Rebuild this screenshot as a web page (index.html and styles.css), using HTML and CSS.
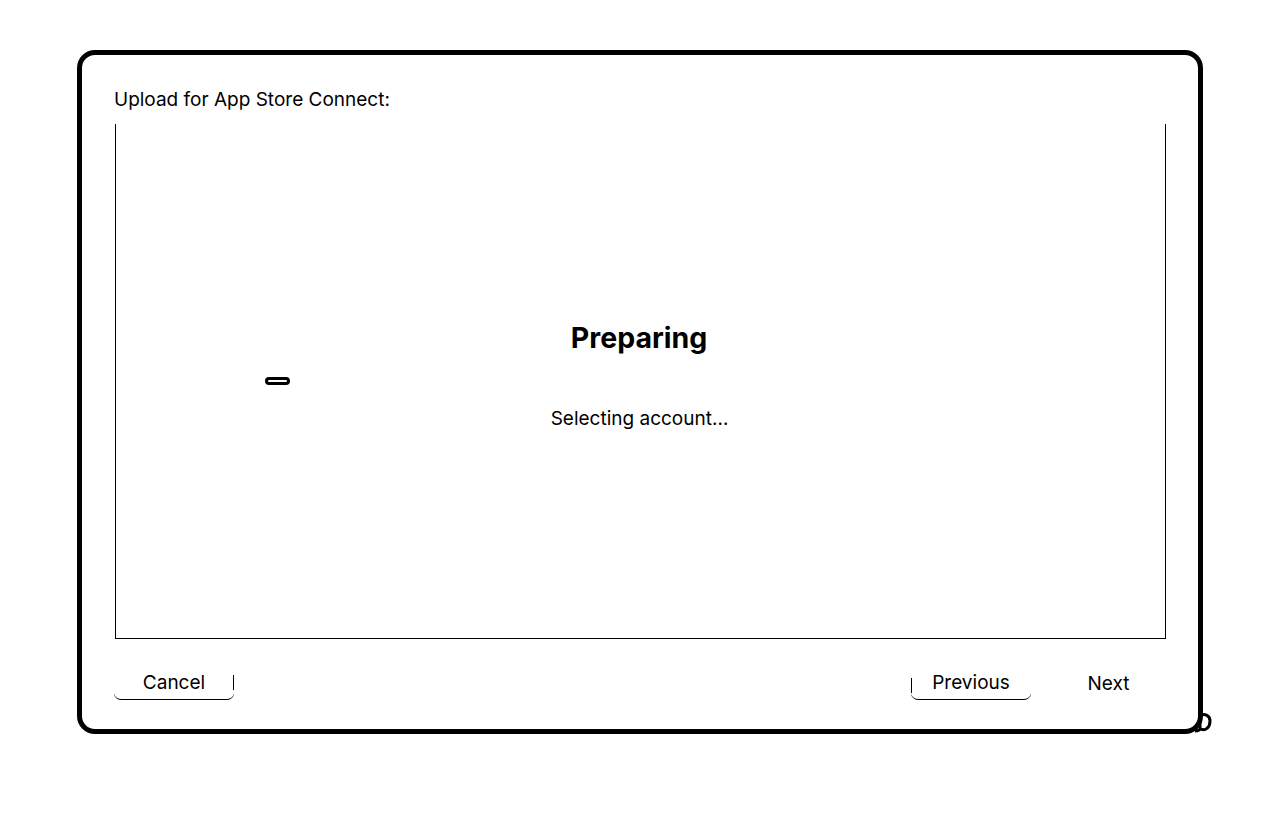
FILE: index.html
```html
<!DOCTYPE html>
<html lang="en">
<head>
<meta charset="utf-8">
<title>Upload for App Store Connect</title>
<link rel="stylesheet" href="styles.css">
</head>
<body>
<div class="page">
  <div class="window">
    <div class="title">Upload for App Store Connect:</div>
    <div class="panel">
      <div class="spinner"></div>
      <div class="heading">Preparing</div>
      <div class="status">Selecting account…</div>
    </div>
    <div class="actions">
      <button class="btn btn-cancel">Cancel</button>
      <div class="spacer"></div>
      <button class="btn btn-prev">Previous</button>
      <button class="btn btn-next">Next</button>
    </div>
    <svg class="grip" width="18" height="30" viewBox="0 0 18 30">
      <path d="M5 2 L5 24" stroke="#000" stroke-width="3" fill="none"/>
      <path d="M5 12 C9 9 15 11 15 17 C15 24 10 27 6 25" stroke="#000" stroke-width="3" fill="none"/>
      <path d="M0 27 C3 27 5 26 6 24" stroke="#000" stroke-width="3" fill="none"/>
    </svg>
  </div>
</div>
</body>
</html>
```
FILE: styles.css
```css
html, body {
  margin: 0;
  padding: 0;
  background: #fff;
}
body {
  font-family: Inter, "Noto Sans", "Liberation Sans", sans-serif;
  color: #000;
}
.page {
  padding: 50px 0 0 77px;
}
.window {
  position: relative;
  box-sizing: border-box;
  width: 1126px;
  height: 684px;
  border: 5px solid #000;
  border-radius: 18px;
  padding: 34px 32px 0 33px;
  display: flex;
  flex-direction: column;
}
.title {
  font-size: 19px;
  line-height: 22px;
  margin-left: -1px;
}
.panel {
  position: relative;
  margin-top: 13px;
  height: 514px;
  border-left: 1px solid #000;
  border-right: 1px solid #000;
  border-bottom: 1px solid #000;
  display: flex;
  flex-direction: column;
  align-items: center;
}
.heading {
  margin-top: 197px;
  margin-right: 3px;
  font-size: 28.5px;
  font-weight: 700;
  line-height: 34px;
}
.status {
  margin-top: 53px;
  margin-right: 2px;
  font-size: 19px;
  line-height: 22px;
}
.spinner {
  position: absolute;
  left: 149px;
  top: 253px;
  width: 19px;
  height: 2px;
  border: 3px solid #000;
  border-radius: 5px;
}
.actions {
  display: flex;
  align-items: flex-start;
  margin-top: 33px;
  margin-left: -1px;
}
.spacer {
  flex: 1;
}
.btn {
  position: relative;
  box-sizing: border-box;
  width: 120px;
  height: 28px;
  padding: 0 0 5px;
  background: transparent;
  border: none;
  border-bottom: 1px solid #000;
  border-radius: 0 0 7px 7px;
  font-family: inherit;
  font-size: 19px;
  line-height: 22px;
  color: #000;
}
.btn-cancel::after {
  content: "";
  position: absolute;
  right: 0;
  top: 3px;
  width: 1px;
  height: 15px;
  background: #000;
}
.btn-prev::before {
  content: "";
  position: absolute;
  left: 0;
  top: 6px;
  width: 1px;
  height: 15px;
  background: #000;
}
.btn-next {
  width: 118px;
  margin-left: 17px;
  padding-left: 3px;
  border-bottom: none;
}
.grip {
  position: absolute;
  right: -15px;
  bottom: -5px;
}
```
